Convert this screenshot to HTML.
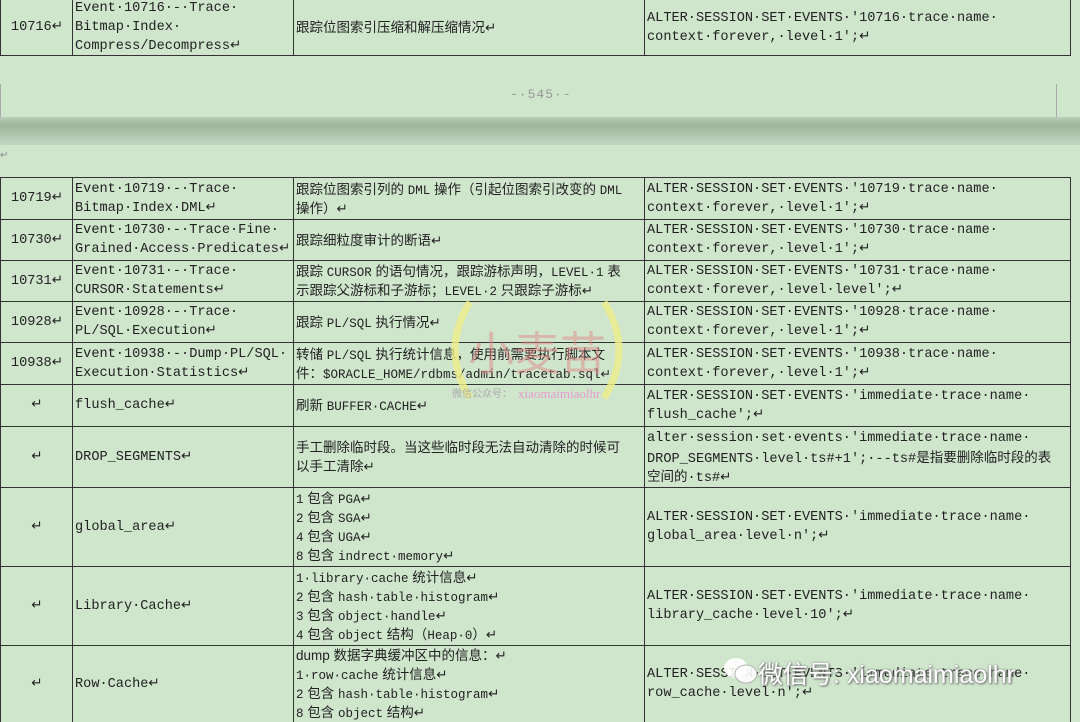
<!DOCTYPE html>
<html><head><meta charset="utf-8"><style>
body{margin:0;width:1080px;height:721px;overflow:hidden;background:#cfe6cc;position:relative;font-family:"Liberation Mono","Noto Sans CJK SC",monospace;font-size:13.6px;color:#222}
.r{position:absolute;left:0;width:1071px;border-bottom:1px solid #333;box-sizing:border-box}
.cl{position:absolute;top:0;bottom:0;border-left:1px solid #333;display:flex;flex-direction:column;justify-content:center;padding-left:2px;box-sizing:border-box;white-space:nowrap;overflow:hidden}
.cl div{height:19px;line-height:19px}
.a{left:0;width:73px;align-items:center;padding:0}
.b{left:72px;width:222px}
.c{left:293px;width:352px;font-family:"Liberation Sans","Noto Sans CJK SC",sans-serif;font-size:13.5px}
.d{left:644px;width:427px;border-right:1px solid #333}
.m{font-family:"Liberation Mono",monospace;font-size:12.5px}
.z{font-family:"Liberation Sans","Noto Sans CJK SC",sans-serif;font-size:13.5px}
.band{position:absolute;left:0;top:117px;width:1080px;height:28px;background:linear-gradient(#b9ccb7,#9db59b 30%,#c4d6c2)}
.pn{position:absolute;left:510px;top:87px;color:#999;font-size:13px;letter-spacing:1px}
.wm{position:absolute;left:432px;top:290px;width:210px;height:120px}
.wx{position:absolute;top:655px;color:#fff;font-family:"Liberation Sans","Noto Sans CJK SC",sans-serif;font-size:25px;text-shadow:0 0 2px #888,1px 1px 2px #666}
</style></head><body>
<div class="r" style="top:-1px;height:57px;border-top:1px solid #333">
<div class="cl a"><div>10716↵</div></div><div class="cl b"><div>Event·10716·-·Trace·</div><div>Bitmap·Index·</div><div>Compress/Decompress↵</div></div><div class="cl c"><div>跟踪位图索引压缩和解压缩情况↵</div></div><div class="cl d"><div>ALTER·SESSION·SET·EVENTS·'10716·trace·name·</div><div>context·forever,·level·1';↵</div></div></div>
<div style="position:absolute;left:0;top:84px;width:1px;height:34px;background:#aaa"></div>
<div style="position:absolute;left:1056px;top:84px;width:1px;height:34px;background:#aaa"></div>
<div class="pn">-·545·-</div>
<div class="band"></div>
<div style="position:absolute;left:0;top:150px;font-size:10px;color:#888">↵</div>

<div class="r" style="top:177px;height:43px;border-top:1px solid #333"><div class="cl a"><div>10719↵</div></div><div class="cl b"><div>Event·10719·-·Trace·</div><div>Bitmap·Index·DML↵</div></div><div class="cl c"><div>跟踪位图索引列的 <span class="m">DML</span> 操作（引起位图索引改变的 <span class="m">DML</span></div><div>操作）↵</div></div><div class="cl d"><div>ALTER·SESSION·SET·EVENTS·'10719·trace·name·</div><div>context·forever,·level·1';↵</div></div></div>
<div class="r" style="top:220px;height:41px"><div class="cl a"><div>10730↵</div></div><div class="cl b"><div>Event·10730·-·Trace·Fine·</div><div>Grained·Access·Predicates↵</div></div><div class="cl c"><div>跟踪细粒度审计的断语↵</div></div><div class="cl d"><div>ALTER·SESSION·SET·EVENTS·'10730·trace·name·</div><div>context·forever,·level·1';↵</div></div></div>
<div class="r" style="top:261px;height:41px"><div class="cl a"><div>10731↵</div></div><div class="cl b"><div>Event·10731·-·Trace·</div><div>CURSOR·Statements↵</div></div><div class="cl c"><div>跟踪 <span class="m">CURSOR</span> 的语句情况，跟踪游标声明，<span class="m">LEVEL·1</span> 表</div><div>示跟踪父游标和子游标；<span class="m">LEVEL·2</span> 只跟踪子游标↵</div></div><div class="cl d"><div>ALTER·SESSION·SET·EVENTS·'10731·trace·name·</div><div>context·forever,·level·level';↵</div></div></div>
<div class="r" style="top:302px;height:41px"><div class="cl a"><div>10928↵</div></div><div class="cl b"><div>Event·10928·-·Trace·</div><div>PL/SQL·Execution↵</div></div><div class="cl c"><div>跟踪 <span class="m">PL/SQL</span> 执行情况↵</div></div><div class="cl d"><div>ALTER·SESSION·SET·EVENTS·'10928·trace·name·</div><div>context·forever,·level·1';↵</div></div></div>
<div class="r" style="top:343px;height:42px"><div class="cl a"><div>10938↵</div></div><div class="cl b"><div>Event·10938·-·Dump·PL/SQL·</div><div>Execution·Statistics↵</div></div><div class="cl c"><div>转储 <span class="m">PL/SQL</span> 执行统计信息，使用前需要执行脚本文</div><div>件：<span class="m">$ORACLE_HOME/rdbms/admin/tracetab.sql↵</span></div></div><div class="cl d"><div>ALTER·SESSION·SET·EVENTS·'10938·trace·name·</div><div>context·forever,·level·1';↵</div></div></div>
<div class="r" style="top:385px;height:42px"><div class="cl a"><div>↵</div></div><div class="cl b"><div>flush_cache↵</div></div><div class="cl c"><div>刷新 <span class="m">BUFFER·CACHE</span>↵</div></div><div class="cl d"><div>ALTER·SESSION·SET·EVENTS·'immediate·trace·name·</div><div>flush_cache';↵</div></div></div>
<div class="r" style="top:427px;height:61px"><div class="cl a"><div>↵</div></div><div class="cl b"><div>DROP_SEGMENTS↵</div></div><div class="cl c"><div>手工删除临时段。当这些临时段无法自动清除的时候可</div><div>以手工清除↵</div></div><div class="cl d"><div>alter·session·set·events·'immediate·trace·name·</div><div>DROP_SEGMENTS·level·ts#+1';·--ts#<span class="z">是指要删除临时段的表</span></div><div><span class="z">空间的</span>·ts#↵</div></div></div>
<div class="r" style="top:488px;height:79px"><div class="cl a"><div>↵</div></div><div class="cl b"><div>global_area↵</div></div><div class="cl c"><div><span class="m">1</span> 包含 <span class="m">PGA</span>↵</div><div><span class="m">2</span> 包含 <span class="m">SGA</span>↵</div><div><span class="m">4</span> 包含 <span class="m">UGA</span>↵</div><div><span class="m">8</span> 包含 <span class="m">indrect·memory</span>↵</div></div><div class="cl d"><div>ALTER·SESSION·SET·EVENTS·'immediate·trace·name·</div><div>global_area·level·n';↵</div></div></div>
<div class="r" style="top:567px;height:79px"><div class="cl a"><div>↵</div></div><div class="cl b"><div>Library·Cache↵</div></div><div class="cl c"><div><span class="m">1·library·cache</span> 统计信息↵</div><div><span class="m">2</span> 包含 <span class="m">hash·table·histogram</span>↵</div><div><span class="m">3</span> 包含 <span class="m">object·handle</span>↵</div><div><span class="m">4</span> 包含 <span class="m">object</span> 结构（<span class="m">Heap·0</span>）↵</div></div><div class="cl d"><div>ALTER·SESSION·SET·EVENTS·'immediate·trace·name·</div><div>library_cache·level·10';↵</div></div></div>
<div class="r" style="top:646px;height:76px;border-bottom:none"><div class="cl a"><div>↵</div></div><div class="cl b"><div>Row·Cache↵</div></div><div class="cl c" style="justify-content:flex-start;padding-top:0"><div>dump 数据字典缓冲区中的信息：↵</div><div><span class="m">1·row·cache</span> 统计信息↵</div><div><span class="m">2</span> 包含 <span class="m">hash·table·histogram</span>↵</div><div><span class="m">8</span> 包含 <span class="m">object</span> 结构↵</div></div><div class="cl d"><div>ALTER·SESSION·SET·EVENTS·'immediate·trace·name·</div><div>row_cache·level·n';↵</div></div></div>

<svg class="wm" viewBox="0 0 210 120"><path d="M38 12 Q8 60 38 108" fill="none" stroke="#eeee88" stroke-width="7" opacity=".8"/><path d="M172 12 Q202 60 172 108" fill="none" stroke="#eeee88" stroke-width="7" opacity=".8"/><text x="105" y="80" text-anchor="middle" font-family="Noto Sans CJK SC,sans-serif" font-size="46" fill="#e08a8a" opacity=".5">小麦苗</text><text x="20" y="107" font-family="Noto Sans CJK SC,sans-serif" font-size="10" fill="#aaa">微信公众号：</text><text x="86" y="108" font-family="Liberation Serif,serif" font-size="13" fill="#e59bd0">xiaomaimiaolhr</text></svg>
<svg style="position:absolute;left:722px;top:656px" width="36" height="30"><ellipse cx="14" cy="12" rx="12" ry="10" fill="#fff" opacity=".9"/><ellipse cx="24" cy="18" rx="11" ry="9" fill="#fff" opacity=".9" stroke="#aaa"/></svg>
<div class="wx" style="left:758px">微信号: xiaomaimiaolhr</div>
</body></html>
